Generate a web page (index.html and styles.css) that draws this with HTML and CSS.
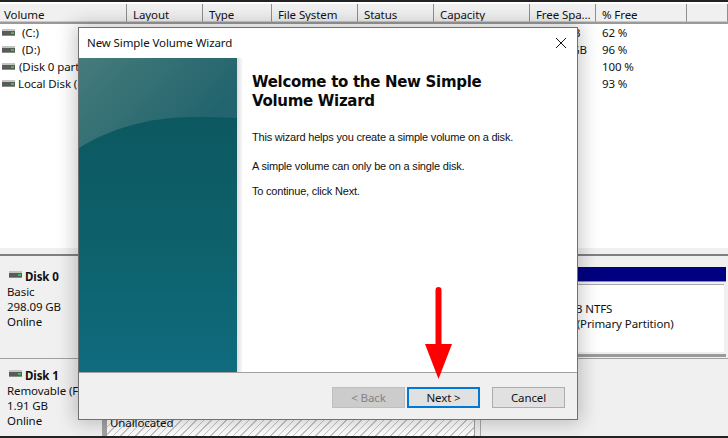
FILE: index.html
```html
<!DOCTYPE html>
<html lang="en">
<head>
<meta charset="utf-8">
<title>New Simple Volume Wizard</title>
<link rel="stylesheet" href="styles.css">
</head>
<body>
<svg class="defs" width="0" height="0" aria-hidden="true">
  <symbol id="hdd" viewBox="0 0 13 7">
    <rect x="0" y="0" width="13" height="2" fill="#c4c4c4"/>
    <rect x="0" y="2" width="13" height="4" fill="#5a5a5a"/>
    <rect x="0" y="6" width="13" height="1" fill="#8a8a8a"/>
    <rect x="9" y="3" width="3" height="2" fill="#35c24a"/>
  </symbol>
</svg>
<div class="app">
  <div class="header">
    <div class="hcell hcell-first">Volume</div>
    <div class="hcell">Layout</div>
    <div class="hcell">Type</div>
    <div class="hcell">File System</div>
    <div class="hcell">Status</div>
    <div class="hcell">Capacity</div>
    <div class="hcell">Free Spa...</div>
    <div class="hcell">% Free</div>
    <div class="hcell"></div>
  </div>
  <div class="list">
    <div class="row"><div class="vol vol-c"><svg class="hdd"><use href="#hdd"/></svg><span>(C:)</span></div><div class="free">148.0 GB</div><div class="pct">62 %</div></div>
    <div class="row"><div class="vol vol-d"><svg class="hdd"><use href="#hdd"/></svg><span>(D:)</span></div><div class="free">148.06 GB</div><div class="pct">96 %</div></div>
    <div class="row"><div class="vol vol-p"><svg class="hdd"><use href="#hdd"/></svg><span>(Disk 0 partition 1)</span></div><div class="free"></div><div class="pct">100 %</div></div>
    <div class="row"><div class="vol vol-l"><svg class="hdd"><use href="#hdd"/></svg><span>Local Disk (F:)</span></div><div class="free"></div><div class="pct">93 %</div></div>
  </div>
  <div class="strip"></div>
  <div class="disks">
    <div class="disk disk-0">
      <div class="disk-label">
        <div class="disk-name"><svg class="hdd"><use href="#hdd"/></svg><b>Disk 0</b></div>
        <div>Basic</div>
        <div>298.09 GB</div>
        <div>Online</div>
      </div>
      <div class="track track-0">
        <div class="partition">
          <div class="part-head"></div>
          <div class="part-body">
            <div class="part-size">59.88 GB NTFS</div>
            <div>Healthy (Primary Partition)</div>
          </div>
        </div>
      </div>
    </div>
    <div class="disk disk-1">
      <div class="disk-label">
        <div class="disk-name"><svg class="hdd"><use href="#hdd"/></svg><b>Disk 1</b></div>
        <div>Removable (F:)</div>
        <div>1.91 GB</div>
        <div>Online</div>
      </div>
      <div class="track track-1">
        <div class="unallocated"><span>Unallocated</span></div>
        <div class="spare"></div>
      </div>
    </div>
  </div>

  <div class="wizard">
    <div class="wiz-title">
      <span>New Simple Volume Wizard</span>
      <svg class="close" width="10" height="10" viewBox="0 0 10 10"><path d="M0 0L10 10M10 0L0 10" stroke="#111" stroke-width="1" fill="none"/></svg>
    </div>
    <div class="wiz-main">
      <svg class="banner" width="158" height="314" viewBox="0 0 158 314">
        <defs>
          <linearGradient id="top" gradientUnits="userSpaceOnUse" x1="0" y1="0" x2="100" y2="90">
            <stop offset="0" stop-color="#467b7b"/>
            <stop offset="1" stop-color="#23656e"/>
          </linearGradient>
          <linearGradient id="low" x1="0" y1="0" x2="0" y2="1">
            <stop offset="0" stop-color="#0c5860"/>
            <stop offset="0.5" stop-color="#0d616b"/>
            <stop offset="1" stop-color="#0f6b7e"/>
          </linearGradient>
        </defs>
        <rect width="158" height="314" fill="url(#top)"/>
        <path d="M0 90C30 71 70 59 115 59C130 59 145 59 158 60V314H0Z" fill="url(#low)"/>
      </svg>
      <div class="wiz-copy">
        <h1>Welcome to the New Simple Volume Wizard</h1>
        <p class="p1">This wizard helps you create a simple volume on a disk.</p>
        <p class="p2">A simple volume can only be on a single disk.</p>
        <p class="p3">To continue, click Next.</p>
      </div>
    </div>
    <div class="wiz-foot">
      <button class="btn btn-off" type="button">&lt; Back</button>
      <button class="btn btn-next" type="button">Next &gt;</button>
      <button class="btn btn-cancel" type="button">Cancel</button>
    </div>
  </div>

  <svg class="arrow" width="28" height="93" viewBox="0 0 28 93">
    <path d="M10.5 3a3 3 0 0 1 6 0V57H27L13.5 92L0 57H10.5Z" fill="#fe0000"/>
  </svg>
</div>
</body>
</html>
```
FILE: styles.css
```css
* { box-sizing: border-box; }
html, body { margin: 0; padding: 0; }
body { background: #f0f0f0; }
.defs { position: absolute; }
.app {
  position: relative;
  width: 728px;
  height: 438px;
  overflow: hidden;
  display: flex;
  flex-direction: column;
  background: #fff;
  color: #111;
  font: 11.5px/15px "Noto Sans", sans-serif;
  letter-spacing: -.1px;
  border-top: 2px solid #222;
  border-bottom: 2px solid #222;
}
.header {
  display: grid;
  grid-template-columns: 127px 76px 69px 86px 76px 96px 66px 91px 1fr;
  height: 22px;
  padding-top: 2px;
  background: #fff;
  border-bottom: 2px solid #9a9a9a;
}
.hcell {
  background: #f0f0f0;
  border-right: 1px solid #8f8f8f;
  border-bottom: 1px solid #c8c8c8;
  padding: 3px 0 0 6px;
  white-space: nowrap;
  overflow: hidden;
}
.hcell-first { padding-left: 4px; }
.list { height: 224px; background: #fff; }
.strip { height: 6px; flex: none; background: #f0f0f0; }
.row {
  display: grid;
  grid-template-columns: 533px 63px 1fr;
  height: 17px;
  align-items: center;
}
.vol { display: flex; align-items: center; white-space: nowrap; padding-left: 2px; }
.hdd { width: 13px; height: 7px; flex: none; }
.vol-c span, .vol-d span { margin-left: 7px; }
.vol-p span { margin-left: 4px; }
.vol-l span { margin-left: 3px; }
.pct { padding-left: 6px; }
.disks {
  flex: 1;
  display: flex;
  flex-direction: column;
  background: #f0f0f0;
  border-top: 2px solid #7f7f7f;
}
.disk { display: flex; }
.disk-0 { height: 103px; border-bottom: 1px solid #a0a0a0; }
.disk-1 { flex: 1; }
.disk-label { width: 102px; flex: none; padding: 12px 0 0 7px; white-space: nowrap; overflow: hidden; }
.disk-1 .disk-label { padding-top: 8px; }
.disk-name { display: flex; align-items: center; gap: 3px; margin-left: 2px; height: 16px; }
.disk-name .hdd { margin-top: -3px; }
.disk-name b { font-weight: 700; }
.track { flex: 1; display: flex; min-width: 0; }
.track-0 { padding: 11px 2px 0 420px; }
.partition { flex: 1; height: 90px; border-bottom: 3px solid #9a9a9a; }
.part-head { height: 14px; background: #000080; border-bottom: 1px solid #8f8f8f; box-sizing: content-box; }
.part-body {
  height: 68px;
  background: #fff;
  border-top: 1px solid #a8a8a8;
  margin-top: 2px;
  margin-right: 2px;
  padding: 16px 0 0 11px;
  white-space: nowrap;
}
.part-size { padding-left: 2px; }
.track-1 { align-items: stretch; }
.unallocated {
  width: 373px;
  display: flex;
  align-items: flex-end;
  padding: 0 0 0 3px;
  border-left: 5px solid #a3a3a3;
  border-right: 1px solid #a3a3a3;
  background-color: #fff;
  background-image: repeating-linear-gradient(135deg, #c6c6c6 0, #c6c6c6 1px, #fff 1px, #fff 5.3px);
}
.unallocated span { line-height: 13px; margin-bottom: 7px; }
.spare { width: 245px; margin-left: 5px; border-left: 1px solid #a8a8a8; }

.wizard {
  position: absolute;
  left: 78px;
  top: 25px;
  width: 500px;
  height: 393px;
  display: flex;
  flex-direction: column;
  background: #fff;
  border: 1px solid #707070;
  box-shadow: 0 0 18px 3px rgba(0, 0, 0, .22);
}
.wiz-title {
  height: 30px;
  flex: none;
  display: flex;
  justify-content: space-between;
  align-items: center;
  padding: 0 11px 2px 8px;
}
.close { flex: none; margin-top: 2px; }
.wiz-main { flex: 1; display: flex; min-height: 0; }
.banner { display: block; flex: none; }
.wiz-copy {
  flex: 1;
  padding: 15px 0 0 15px;
  background: linear-gradient(90deg, #dcdcdc, #fff 6px);
  font-family: "Liberation Sans", sans-serif;
  font-size: 11px;
  letter-spacing: -.2px;
  line-height: 14px;
  color: #111;
}
.wiz-copy h1 {
  margin: 0;
  width: 250px;
  font: 700 15px/19px "DejaVu Sans", sans-serif;
  letter-spacing: -.3px;
  color: #0a0a0a;
}
.wiz-copy p { margin: 0; }
.p1 { padding-top: 19px; }
.p2 { padding-top: 15px; }
.p3 { padding-top: 11px; }
.wiz-foot {
  height: 47px;
  flex: none;
  display: flex;
  padding: 14px 12px 0 0;
  justify-content: flex-end;
  align-items: flex-start;
  background: #f0f0f0;
  border-top: 1px solid #a0a0a0;
}
.btn {
  width: 73px;
  height: 21px;
  padding: 0;
  font: inherit;
  letter-spacing: inherit;
  color: #111;
  background: #e1e1e1;
  border: 1px solid #adadad;
  border-radius: 0;
}
.btn-off { color: #838383; background: #ccc; border-color: #bfbfbf; margin-right: 2px; }
.btn-next { border: 2px solid #0078d7; margin-right: 12px; }
.arrow { position: absolute; left: 425px; top: 285px; }
```
